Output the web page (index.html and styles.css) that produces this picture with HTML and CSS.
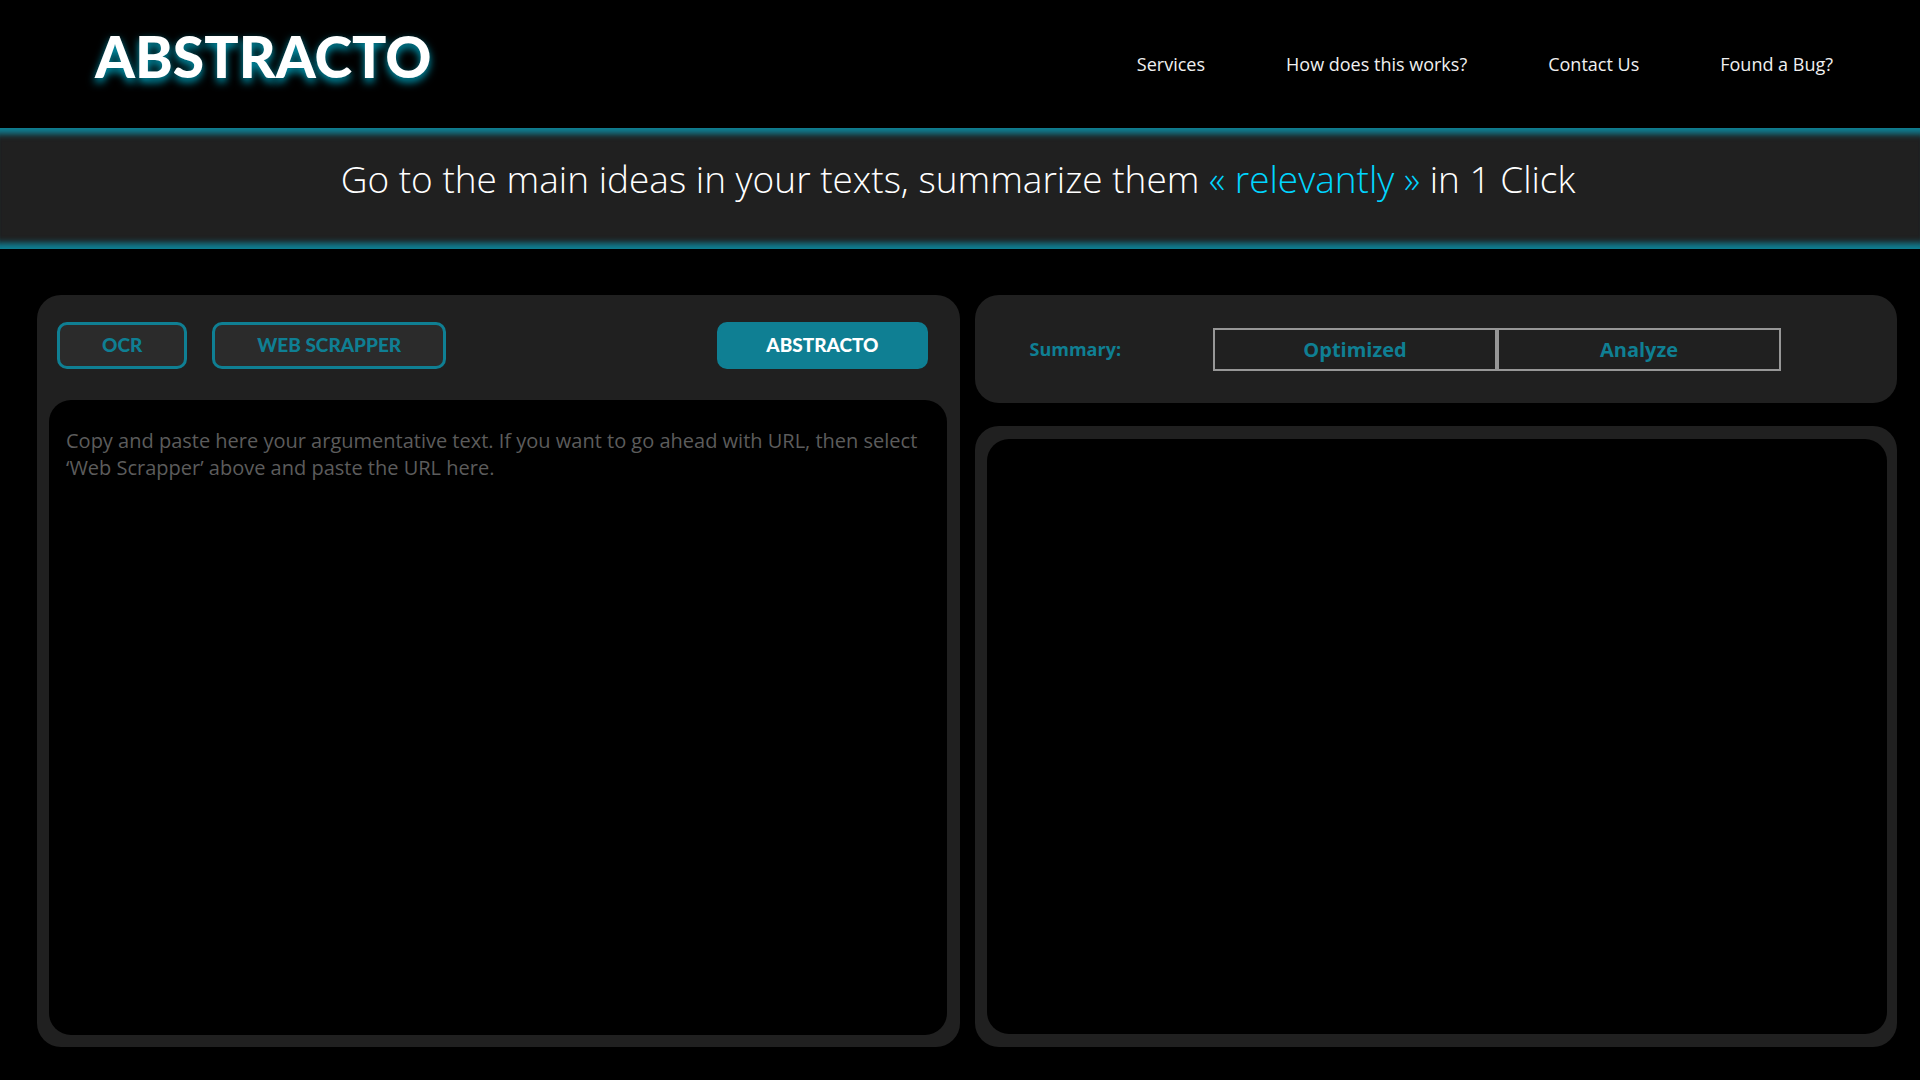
FILE: index.html
```html
<!DOCTYPE html>
<html lang="en">
<head>
  <meta charset="utf-8">
  <meta name="viewport" content="width=device-width, initial-scale=1">
  <title>Abstracto</title>
  <link rel="stylesheet" href="styles.css">
</head>
<body>
  <header class="site-header">
    <a class="logo" href="#">ABSTRACTO</a>
    <nav class="site-nav">
      <a href="#services">Services</a>
      <a href="#how">How does this works?</a>
      <a href="#contact">Contact Us</a>
      <a href="#bug">Found a Bug?</a>
    </nav>
  </header>

  <section class="banner">
    <h1 class="tagline">Go to the main ideas in your texts, summarize them <span class="accent">« relevantly »</span> in 1 Click</h1>
  </section>

  <main class="workspace">
    <section class="panel source">
      <div class="toolbar">
        <button class="btn" type="button">OCR</button>
        <button class="btn" type="button">WEB SCRAPPER</button>
        <button class="btn btn-primary" type="button">ABSTRACTO</button>
      </div>
      <textarea class="field" aria-label="Source text" placeholder="Copy and paste here your argumentative text. If you want to go ahead with URL, then select ‘Web Scrapper’ above and paste the URL here."></textarea>
    </section>

    <div class="results">
      <section class="panel modes">
        <h2 class="modes-title">Summary:</h2>
        <div class="segments">
          <button class="segment" type="button">Optimized</button>
          <button class="segment" type="button">Analyze</button>
        </div>
      </section>
      <section class="panel result">
        <textarea class="field" aria-label="Summary" readonly></textarea>
      </section>
    </div>
  </main>
</body>
</html>
```
FILE: styles.css
```css
:root {
  --teal: #0f7f93;
  --cyan: #00d5ff;
  --panel: #202020;
  --display: Lato, "Open Sans", sans-serif;
}

* {
  box-sizing: border-box;
}

body {
  display: flex;
  flex-direction: column;
  min-height: 100vh;
  margin: 0;
  background: #000;
  color: #fff;
  font-family: "Open Sans", Lato, sans-serif;
  font-weight: 400;
}

button,
textarea {
  font-family: inherit;
  font-weight: inherit;
}

.site-header {
  display: flex;
  align-items: center;
  justify-content: space-between;
  min-height: 128px;
  padding: 0 87px 16px 95px;
}

.logo {
  color: #fff;
  font-family: var(--display);
  font-size: 57px;
  font-weight: 900;
  line-height: 64px;
  text-decoration: none;
  text-shadow: 0 4px 8px #00a5c0;
}

.site-nav {
  display: flex;
  gap: 81px;
  padding-top: 16px;
}

.site-nav a {
  color: #f0f0f0;
  font-size: 18px;
  line-height: 24px;
  text-decoration: none;
}

.banner {
  padding: 29px 28px 48px 24px;
  background: var(--panel);
  box-shadow:
    inset 0 12px 6px -6px var(--teal),
    inset 0 -12px 6px -6px var(--teal);
  text-align: center;
}

.tagline {
  margin: 0;
  font-size: 37px;
  font-weight: 300;
  line-height: 44px;
}

.accent {
  color: var(--cyan);
}

.workspace {
  display: grid;
  flex: 1;
  grid-template-columns: 1fr 1fr;
  gap: 15px;
  padding: 46px 23px 33px 37px;
}

.panel {
  border-radius: 24px;
  background: var(--panel);
}

.source {
  display: flex;
  flex-direction: column;
  padding: 27px 13px 12px 12px;
}

.toolbar {
  display: flex;
  gap: 25px;
  padding: 0 19px 31px 8px;
}

.btn {
  height: 47px;
  padding: 0 42px 2px;
  border: 3px solid var(--teal);
  border-radius: 10px;
  background: #2b2b2b;
  color: var(--teal);
  font-family: var(--display);
  font-size: 19px;
  font-weight: 900;
}

.btn-primary {
  margin-left: auto;
  padding: 0 46px 2px;
  background: var(--teal);
  color: #fff;
}

.field {
  display: block;
  flex: 1;
  width: 100%;
  padding: 27px 17px;
  border: 0;
  border-radius: 22px;
  background: #000;
  color: #fff;
  font-size: 20px;
  line-height: 27px;
  outline: none;
  resize: none;
}

.field::placeholder {
  color: #5c5c5c;
}

.results {
  display: flex;
  flex-direction: column;
  gap: 23px;
}

.modes {
  display: flex;
  align-items: center;
  min-height: 108px;
  padding: 0 116px 0 55px;
}

.modes-title {
  flex: 1;
  margin: 0;
  color: var(--teal);
  font-size: 18px;
  font-weight: 700;
}

.segments {
  display: flex;
  flex: 0 1 568px;
}

.segment {
  flex: 1;
  height: 43px;
  border: 2px solid #979797;
  background: transparent;
  color: var(--teal);
  font-size: 20px;
  font-weight: 700;
}

.result {
  display: flex;
  flex: 1;
  padding: 13px 10px 13px 12px;
}
```
